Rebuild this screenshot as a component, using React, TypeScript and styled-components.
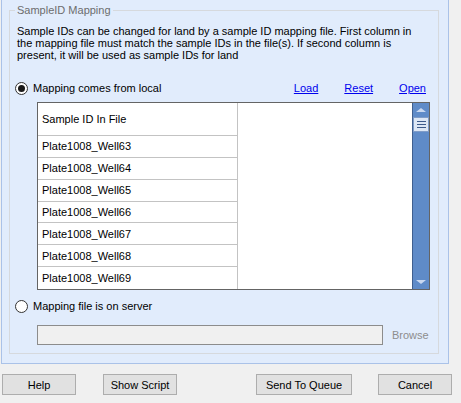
import React from 'react';
import styled, { createGlobalStyle } from 'styled-components';

const Global = createGlobalStyle`
  html, body {
    margin: 0;
    padding: 0;
    background: #f0f0f0;
  }
  body {
    font-family: "Liberation Sans", Arial, sans-serif;
    font-size: 11px;
    color: #000;
  }
`;

const Window = styled.div`
  width: 461px;
  height: 403px;
  display: flex;
  flex-direction: column;
  overflow: hidden;
`;

const Panel = styled.div`
  margin-left: 1px;
  width: 448px;
  height: 364px;
  box-sizing: border-box;
  background: #e1ecfc;
  border: 1px solid #aac2e8;
  border-top: none;
  padding-left: 7px;
`;

const GroupBox = styled.fieldset`
  margin: 3px 0 0 0;
  padding: 0;
  width: 430px;
  height: 351px;
  box-sizing: border-box;
  border: 1px solid #d6d9dd;
  display: flex;
  flex-direction: column;
  min-width: 0;
`;

const Legend = styled.legend`
  margin-left: 5px;
  padding: 0 2px;
  line-height: 14px;
  color: #6d6d6d;
`;

const Description = styled.p`
  margin: 8px 0 0 7px;
  width: 400px;
  line-height: 12px;
`;

const OptionRow = styled.div<{ $top: number }>`
  display: flex;
  align-items: center;
  height: 14px;
  margin-top: ${p => p.$top}px;
  padding-left: 5px;
  padding-right: 12px;
`;

const Radio = styled.span<{ $checked?: boolean }>`
  width: 13px;
  height: 13px;
  box-sizing: border-box;
  border-radius: 50%;
  border: 1px solid #333;
  background: #fff;
  display: flex;
  align-items: center;
  justify-content: center;
  margin-right: 5px;
  &::after {
    content: '';
    width: 7px;
    height: 7px;
    border-radius: 50%;
    background: ${p => (p.$checked ? '#1a1a1a' : 'transparent')};
  }
`;

const Links = styled.div`
  margin-left: auto;
  display: flex;
  gap: 26px;
`;

const Link = styled.a`
  color: #0000ee;
  text-decoration: underline;
  cursor: pointer;
`;

const Table = styled.div`
  margin: 7px 0 0 27px;
  width: 393px;
  height: 188px;
  box-sizing: border-box;
  border: 1px solid #646464;
  display: flex;
  background: #fff;
`;

const Column = styled.div`
  width: 200px;
  box-sizing: border-box;
  border-right: 1px solid #c3c3c3;
  display: flex;
  flex-direction: column;
`;

const Cell = styled.div<{ $header?: boolean }>`
  height: ${p => (p.$header ? 33 : 22)}px;
  box-sizing: border-box;
  border-bottom: 1px solid #c3c3c3;
  padding-left: 4px;
  display: flex;
  align-items: center;
  &:last-child {
    border-bottom: none;
  }
`;

const Blank = styled.div`
  flex: 1;
`;

const ScrollBar = styled.div`
  width: 17px;
  box-sizing: border-box;
  border-left: 1px solid #3f5f8f;
  background: #5f8bc8;
  display: flex;
  flex-direction: column;
  align-items: center;
`;

const Arrow = styled.div<{ $down?: boolean }>`
  height: 14px;
  display: flex;
  align-items: center;
  justify-content: center;
  margin-top: ${p => (p.$down ? 'auto' : '0')};
  &::after {
    content: '';
    border-left: 5px solid transparent;
    border-right: 5px solid transparent;
    ${p => (p.$down ? 'border-top: 4px solid #c9d8f0;' : 'border-bottom: 4px solid #c9d8f0;')}
  }
`;

const Thumb = styled.div`
  width: 16px;
  height: 15px;
  margin-top: 0px;
  box-sizing: border-box;
  background: #dde7f5;
  border: 1px solid #7f9cc8;
  display: flex;
  flex-direction: column;
  justify-content: center;
  align-items: center;
  gap: 2px;
  span {
    width: 9px;
    height: 1px;
    background: #3d5a8a;
  }
`;

const PathRow = styled.div`
  display: flex;
  align-items: center;
  margin: 12px 0 0 27px;
`;

const PathBox = styled.div`
  width: 346px;
  height: 20px;
  box-sizing: border-box;
  background: #f0f0f0;
  border: 1px solid #8c8c8c;
`;

const DisabledText = styled.span`
  margin-left: 9px;
  color: #8d8d8d;
`;

const ButtonBar = styled.div`
  display: flex;
  margin-top: 10px;
  padding-left: 2px;
  padding-right: 9px;
`;

const Button = styled.button<{ $w: number; $gap: number; $push?: boolean }>`
  width: ${p => p.$w}px;
  height: 21px;
  box-sizing: border-box;
  margin: 0;
  margin-left: ${p => (p.$push ? 'auto' : `${p.$gap}px`)};
  padding: 0;
  background: #e1e1e1;
  border: 1px solid #adadad;
  border-radius: 0;
  font-family: inherit;
  font-size: 11px;
  color: #000;
`;

const ids = [63, 64, 65, 66, 67, 68, 69].map(n => `Plate1008_Well${n}`);

const App: React.FC = () => {
  return (
    <>
      <Global />
      <Window>
        <Panel>
          <GroupBox>
            <Legend>SampleID Mapping</Legend>
            <Description>
              Sample IDs can be changed for land by a sample ID mapping file. First column in the mapping
              file must match the sample IDs in the file(s). If second column is present, it will be used
              as sample IDs for land
            </Description>
            <OptionRow $top={20}>
              <Radio $checked />
              Mapping comes from local
              <Links>
                <Link>Load</Link>
                <Link>Reset</Link>
                <Link>Open</Link>
              </Links>
            </OptionRow>
            <Table>
              <Column>
                <Cell $header>Sample ID In File</Cell>
                {ids.map(id => (
                  <Cell key={id}>{id}</Cell>
                ))}
              </Column>
              <Blank />
              <ScrollBar>
                <Arrow />
                <Thumb>
                  <span />
                  <span />
                  <span />
                </Thumb>
                <Arrow $down />
              </ScrollBar>
            </Table>
            <OptionRow $top={9}>
              <Radio />
              Mapping file is on server
            </OptionRow>
            <PathRow>
              <PathBox />
              <DisabledText>Browse</DisabledText>
            </PathRow>
          </GroupBox>
        </Panel>
        <ButtonBar>
          <Button $w={74} $gap={0}>Help</Button>
          <Button $w={74} $gap={27}>Show Script</Button>
          <Button $w={96} $gap={0} $push>Send To Queue</Button>
          <Button $w={74} $gap={26}>Cancel</Button>
        </ButtonBar>
      </Window>
    </>
  );
};

export default App;
